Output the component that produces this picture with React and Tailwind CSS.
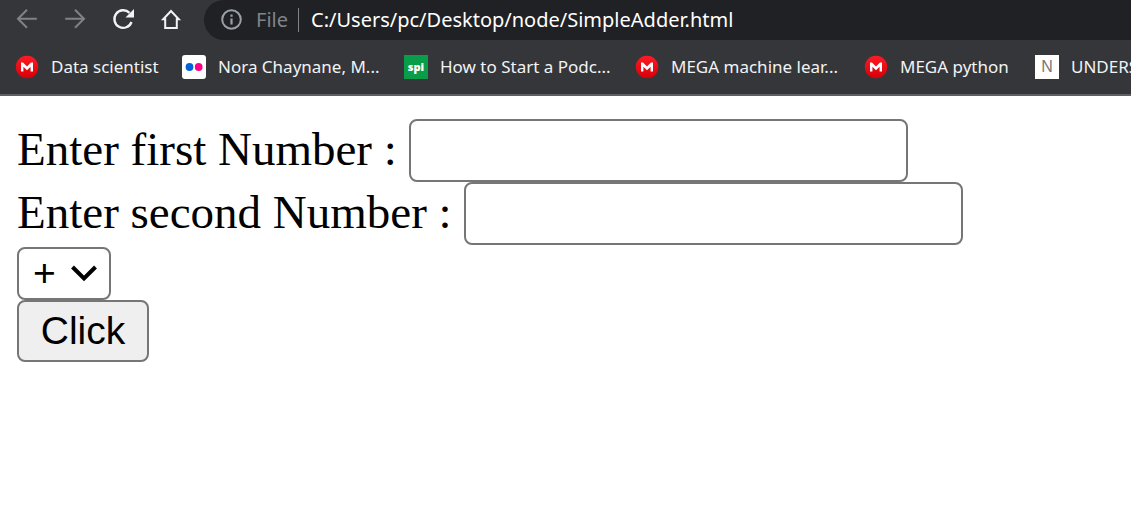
const MegaIcon = () => (
  <svg viewBox="0 0 24 24" className="size-6 shrink-0" aria-hidden="true">
    <defs>
      <linearGradient id="mega" x1="0" y1="0" x2="0" y2="1">
        <stop offset="0" stopColor="#ff1a24" />
        <stop offset="1" stopColor="#d60008" />
      </linearGradient>
    </defs>
    <circle cx="12" cy="12" r="11.2" fill="url(#mega)" />
    <path d="M6 16.5V7.5h2l4 4.1 4-4.1h2v9h-2.4v-4.8L12 15.2l-3.6-3.5v4.8z" fill="#fff" />
  </svg>
);

const FlickrIcon = () => (
  <svg viewBox="0 0 24 24" className="size-6 shrink-0" aria-hidden="true">
    <rect width="24" height="24" rx="3" fill="#fff" />
    <circle cx="7.5" cy="12" r="3.9" fill="#0063dc" />
    <circle cx="16.7" cy="12" r="3.9" fill="#ff0084" />
  </svg>
);

const SpiIcon = () => (
  <span aria-hidden="true" className="flex size-6 shrink-0 items-center justify-center bg-[#0a9d49] pb-0.5 font-['Open_Sans',sans-serif] text-[11px] leading-none font-extrabold text-white">
    spi
  </span>
);

const NIcon = () => (
  <span aria-hidden="true" className="flex size-6 shrink-0 items-center justify-center bg-white font-['Liberation_Sans',sans-serif] text-base leading-none text-[#777777]">
    N
  </span>
);

const bookmarks = [
  { label: "Data scientist", Icon: MegaIcon, width: "w-[107px]" },
  { label: "Nora Chaynane, M...", Icon: FlickrIcon, width: "w-[162px]" },
  { label: "How to Start a Podc...", Icon: SpiIcon, width: "w-[171px]" },
  { label: "MEGA machine lear...", Icon: MegaIcon, width: "w-[169px]" },
  { label: "MEGA python", Icon: MegaIcon, width: "w-[111px]" },
  { label: "UNDERSTANDING", Icon: NIcon, width: "w-[160px]" },
];

function NavButton({ label, color, children }) {
  return (
    <button type="button" aria-label={label} className={`size-6 shrink-0 ${color}`}>
      <svg viewBox="0 0 24 24" className="size-6" fill="none" stroke="currentColor" strokeWidth="2">
        {children}
      </svg>
    </button>
  );
}

function BrowserBar() {
  return (
    <header className="overflow-hidden border-b-2 border-[#5f6064] bg-[#35363a] font-['Noto_Sans',sans-serif]">
      <div className="flex h-10 items-center pl-[15px]">
        <nav className="flex shrink-0 gap-6 pr-[21px]" aria-label="Navigation">
          <NavButton label="Back" color="text-[#818285]">
            <path d="M21.800 10.700H3.500M12 1.700l-9 9 9 9" />
          </NavButton>
          <NavButton label="Forward" color="text-[#818285]">
            <path d="M2.200 10.700h18.300M12 1.700l9 9-9 9" />
          </NavButton>
          <NavButton label="Reload" color="text-[#f1f3f4]">
            <path d="M18.500 4.900A8.800 8.800 0 1 0 20.500 14" strokeWidth="2.300" />
            <path d="M23 1v8.500h-8.500z" fill="currentColor" stroke="none" />
          </NavButton>
          <NavButton label="Home" color="text-[#f1f3f4]">
            <path d="M12 3L4.200 11.300h2v8.700h11.600v-8.700h2z" />
          </NavButton>
        </nav>
        <div className="flex h-10 min-w-0 grow items-center rounded-l-full bg-[#202124] pl-4">
          <svg viewBox="0 0 24 24" className="size-6 shrink-0" fill="none" stroke="#9aa0a6" strokeWidth="2" aria-hidden="true">
            <circle cx="11.500" cy="11.500" r="9.300" />
            <path d="M11.500 10.500v6M11.500 6.500v2.200" strokeWidth="2.200" />
          </svg>
          <span className="w-[54px] shrink-0 pl-3 text-xl text-[#80858a]">File</span>
          <span className="h-6 w-px shrink-0 bg-[#80858a]" />
          <input
            type="text"
            aria-label="Address"
            defaultValue="C:/Users/pc/Desktop/node/SimpleAdder.html"
            className="min-w-0 grow bg-transparent pl-3 text-xl text-white outline-none"
          />
        </div>
      </div>
      <nav className="flex h-[54px] items-center gap-6 pl-[15px]" aria-label="Bookmarks">
        {bookmarks.map(({ label, Icon, width }) => (
          <a key={label} href="#" className="flex shrink-0 items-center gap-3 text-[17px] whitespace-nowrap text-[#f1f3f4]">
            <Icon />
            <span className={width}>{label}</span>
          </a>
        ))}
      </nav>
    </header>
  );
}

const field =
  "h-[63px] w-[499px] min-w-0 rounded-lg border-2 border-[#767676] bg-white px-1 font-['Liberation_Sans',sans-serif] text-[39px]";

export default function App() {
  return (
    <div className="min-h-screen bg-white text-black">
      <BrowserBar />
      <main className="flex flex-col items-start px-[17px] pt-[23px] font-['Liberation_Serif',serif] text-[47px] leading-none">
        <div className="flex max-w-full items-center gap-3">
          <label htmlFor="first" className="pb-0.5">Enter first Number :</label>
          <input id="first" type="text" className={field} />
        </div>
        <div className="flex max-w-full items-center gap-3">
          <label htmlFor="second" className="pb-0.5">Enter second Number :</label>
          <input id="second" type="text" className={field} />
        </div>
        <div className="mt-0.5 grid items-center">
          <select
            aria-label="Operation"
            className="col-start-1 row-start-1 h-[53px] w-[94px] appearance-none rounded-lg border-2 border-[#767676] bg-white pb-0.5 pl-3.5 font-['Liberation_Sans',sans-serif] text-[39px] leading-none"
          >
            <option>+</option>
            <option>-</option>
            <option>*</option>
            <option>/</option>
          </select>
          <svg viewBox="0 0 28 18" className="pointer-events-none col-start-1 row-start-1 mr-[13px] h-[18px] w-7 justify-self-end" fill="none" stroke="#000" strokeWidth="4" aria-hidden="true">
            <path d="M2.500 2L14 13.500 25.500 2" />
          </svg>
        </div>
        <button
          type="button"
          className="h-[62px] w-[132px] rounded-lg border-2 border-[#767676] bg-[#efefef] pb-0.5 font-['Liberation_Sans',sans-serif] text-[39px] leading-none"
        >
          Click
        </button>
      </main>
    </div>
  );
}
